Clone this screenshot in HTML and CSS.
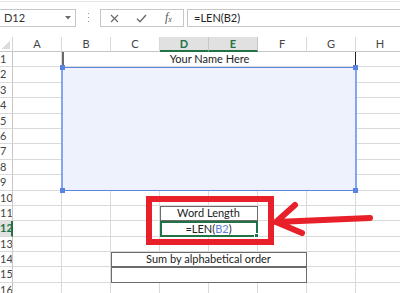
FILE: index.html
```html
<!DOCTYPE html>
<html>
<head>
<meta charset="utf-8">
<link rel="stylesheet" href="styles.css">
</head>
<body>
<div class="toolbar">
  <div class="namebox"><span>D12</span><svg class="caret" width="6" height="4" viewBox="0 0 6 4"><path d="M0 0H6L3 3.5Z" fill="#6b6b6b"/></svg></div>
  <div class="dots"><i></i><i></i><i></i></div>
  <div class="fxbtns">
    <svg class="ico-x" width="9" height="9" viewBox="0 0 9 9"><path d="M1 1L8 8M8 1L1 8" stroke="#6b6b6b" stroke-width="1.2" fill="none"/></svg>
    <svg class="ico-ok" width="11" height="9" viewBox="0 0 11 9"><path d="M1 4.8L4 7.8L10 1" stroke="#6b6b6b" stroke-width="1.4" fill="none"/></svg>
    <span class="fx">f<sub>x</sub></span>
  </div>
  <div class="formula">=LEN(B2)</div>
</div>
<div class="sheet">
  <div class="grid">
    <div class="corner"></div><div class="ch">A</div><div class="ch">B</div><div class="ch">C</div><div class="ch on">D</div><div class="ch on">E</div><div class="ch">F</div><div class="ch">G</div><div class="ch">H</div>

    <div class="rh">1</div><div class="c"></div><div class="c title">Your Name Here</div><div class="c"></div>
    <div class="rh">2</div><div class="c"></div><div class="c"></div><div class="c"></div><div class="c"></div><div class="c"></div><div class="c"></div><div class="c"></div><div class="c"></div>
    <div class="rh">3</div><div class="c"></div><div class="c"></div><div class="c"></div><div class="c"></div><div class="c"></div><div class="c"></div><div class="c"></div><div class="c"></div>
    <div class="rh">4</div><div class="c"></div><div class="c"></div><div class="c"></div><div class="c"></div><div class="c"></div><div class="c"></div><div class="c"></div><div class="c"></div>
    <div class="rh">5</div><div class="c"></div><div class="c"></div><div class="c"></div><div class="c"></div><div class="c"></div><div class="c"></div><div class="c"></div><div class="c"></div>
    <div class="rh">6</div><div class="c"></div><div class="c"></div><div class="c"></div><div class="c"></div><div class="c"></div><div class="c"></div><div class="c"></div><div class="c"></div>
    <div class="rh">7</div><div class="c"></div><div class="c"></div><div class="c"></div><div class="c"></div><div class="c"></div><div class="c"></div><div class="c"></div><div class="c"></div>
    <div class="rh">8</div><div class="c"></div><div class="c"></div><div class="c"></div><div class="c"></div><div class="c"></div><div class="c"></div><div class="c"></div><div class="c"></div>
    <div class="rh">9</div><div class="c"></div><div class="c"></div><div class="c"></div><div class="c"></div><div class="c"></div><div class="c"></div><div class="c"></div><div class="c"></div>
    <div class="rh">10</div><div class="c"></div><div class="c"></div><div class="c"></div><div class="c"></div><div class="c"></div><div class="c"></div><div class="c"></div><div class="c"></div>
    <div class="rh">11</div><div class="c"></div><div class="c"></div><div class="c"></div><div class="c span2 box">Word Length</div><div class="c"></div><div class="c"></div><div class="c"></div>
    <div class="rh on">12</div><div class="c"></div><div class="c"></div><div class="c"></div><div class="c span2 edit">=LEN(<span class="ref">B2</span>)<i class="handle"></i></div><div class="c"></div><div class="c"></div><div class="c"></div>
    <div class="rh">13</div><div class="c"></div><div class="c"></div><div class="c"></div><div class="c"></div><div class="c"></div><div class="c"></div><div class="c"></div><div class="c"></div>
    <div class="rh">14</div><div class="c"></div><div class="c"></div><div class="c span4 box">Sum by alphabetical order</div><div class="c"></div><div class="c"></div>
    <div class="rh">15</div><div class="c"></div><div class="c"></div><div class="c span4 box"></div><div class="c"></div><div class="c"></div>
    <div class="rh">16</div><div class="c"></div><div class="c"></div><div class="c"></div><div class="c"></div><div class="c"></div><div class="c"></div><div class="c"></div><div class="c"></div>
  </div>

  <div class="shape">
    <i class="hd tl"></i><i class="hd tr"></i><i class="hd bl"></i><i class="hd br"></i>
  </div>
  <div class="callout"></div>
  <svg class="arrow" width="400" height="256" viewBox="0 0 400 256">
    <path d="M276 185L370 181M295 168L276 185L302 196" stroke="#e8202a" stroke-width="6" stroke-linecap="round" stroke-linejoin="round" fill="none"/>
  </svg>
</div>
</body>
</html>
```
FILE: styles.css
```css
* { box-sizing: border-box; }
body {
  margin: 0;
  width: 400px;
  height: 293px;
  overflow: hidden;
  background: #fff;
  font-family: Lato, "Liberation Sans", sans-serif;
  color: #222;
}

/* formula bar */
.toolbar {
  margin-top: 1px;
  height: 36px;
  border-top: 1px solid #e3e3e3;
  padding-top: 7px;
  display: flex;
  align-items: flex-start;
  font-size: 11px;
}
.namebox {
  margin-left: -1px;
  width: 77px;
  height: 18px;
  border: 1px solid #c6c6c6;
  padding-left: 4px;
  padding-right: 4px;
  display: flex;
  align-items: center;
  justify-content: space-between;
  line-height: 16px;
  color: #333;
}
.dots {
  margin-left: 12px;
  margin-top: 4px;
  width: 2px;
  display: flex;
  flex-direction: column;
  gap: 3px;
}
.dots i {
  display: block;
  width: 1px;
  height: 1px;
  background: #9a9a9a;
}
.fxbtns {
  margin-left: 10px;
  width: 84px;
  height: 18px;
  border: 1px solid #c6c6c6;
  display: flex;
  align-items: center;
}
.ico-x { margin-left: 9px; }
.ico-ok { margin-left: 17px; }
.fx {
  margin-left: 18px;
  font-family: "Liberation Serif", serif;
  font-style: italic;
  font-size: 12px;
  color: #555;
  line-height: 12px;
}
.fx sub { font-size: 8px; vertical-align: -1px; }
.formula {
  margin-left: 3px;
  margin-right: -3px;
  flex: 1;
  height: 18px;
  border: 1px solid #c6c6c6;
  padding-left: 6px;
  line-height: 16px;
  color: #222;
}

/* sheet */
.sheet {
  position: relative;
}
.grid {
  display: grid;
  grid-template-columns: 13px repeat(8, 49px);
  grid-template-rows: 15px repeat(16, 15.4px);
  font-size: 11px;
  line-height: 14px;
}
.corner {
  border-right: 1px solid #d4d4d4;
  border-bottom: 1px solid #c6c6c6;
  background: linear-gradient(135deg, transparent 50%, #dcdcdc 50%) no-repeat right 2px bottom 2px / 8px 8px;
}
.ch {
  border-right: 1px solid #d9d9d9;
  border-bottom: 1px solid #c6c6c6;
  text-align: center;
  color: #444;
}
.ch.on {
  background: #e1e1e1;
  color: #217346;
  font-weight: bold;
  border-bottom: 2px solid #217346;
  border-right-color: #c6c6c6;
}
.rh {
  border-right: 1px solid #c6c6c6;
  border-bottom: 1px solid #dadada;
  padding-left: 0;
  color: #444;
  font-size: 11px;
  white-space: nowrap;
  overflow: hidden;
}
.rh.on {
  background: #e1e1e1;
  color: #217346;
  font-weight: bold;
  border-right: 2px solid #217346;
}
.c {
  border-right: 1px solid #dadada;
  border-bottom: 1px solid #dadada;
  text-align: center;
  white-space: nowrap;
  color: #222;
}
.title {
  grid-column: span 6;
  border-left: 2px solid #6a6a6a;
  border-right: 1px solid #222;
}
.span2 { grid-column: span 2; }
.span4 { grid-column: span 4; }
.box {
  outline: 1px solid #6b6b6b;
  outline-offset: -1px;
}
.edit {
  position: relative;
  outline: 2px solid #217346;
  outline-offset: -2px;
  line-height: 15px;
}
.ref { color: #5b82d8; }
.handle {
  position: absolute;
  right: -2px;
  bottom: -2px;
  width: 5px;
  height: 5px;
  background: #217346;
  border: 1px solid #fff;
}

/* overlays */
.shape {
  position: absolute;
  left: 61px;
  top: 30px;
  width: 296px;
  height: 124px;
  background: #eef2fd;
  border-top: 1px solid #5f85e4;
  border-bottom: 1px solid #5f85e4;
  border-left: 2px solid #87a5ee;
  border-right: 2px solid #87a5ee;
}
.hd {
  position: absolute;
  width: 5px;
  height: 5px;
  background: #5a82e0;
}
.tl { left: -3px; top: -3px; }
.tr { right: -3px; top: -3px; }
.bl { left: -3px; bottom: -3px; }
.br { right: -3px; bottom: -3px; }
.callout {
  position: absolute;
  left: 146px;
  top: 159px;
  width: 128px;
  height: 49px;
  border: 6px solid #e8202a;
}
.arrow {
  position: absolute;
  left: 0;
  top: 0;
  pointer-events: none;
}
```
